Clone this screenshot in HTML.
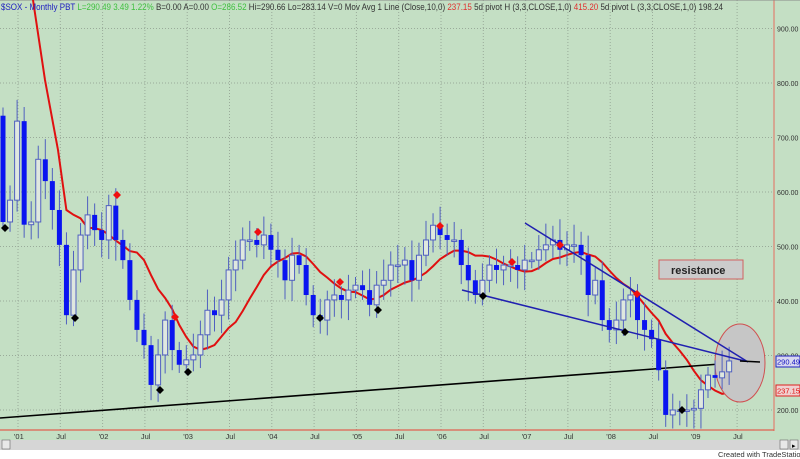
<!DOCTYPE html>
<html><head><meta charset="utf-8"><style>
html,body{margin:0;padding:0;width:800px;height:459px;overflow:hidden;background:#fff;font-family:"Liberation Sans",sans-serif}
svg{display:block}
</style></head><body>
<svg id="s" width="800" height="459" xmlns="http://www.w3.org/2000/svg" font-family="Liberation Sans, sans-serif">
<rect x="0" y="0" width="800" height="440" fill="#c4dfc4"/>
<g id="grid" stroke="#9aab9a" stroke-width="1" stroke-dasharray="1,2"></g>
<line x1="774" y1="0" x2="774" y2="431" stroke="#e08070" stroke-width="1.2"/>
<line x1="0" y1="430" x2="774" y2="430" stroke="#e06050" stroke-width="1.2"/>
<line x1="0" y1="0" x2="800" y2="0" stroke="#888"/>
<polyline id="ma" fill="none" stroke="#e01010" stroke-width="2"/>
<line x1="0" y1="418" x2="760" y2="361" stroke="#000" stroke-width="1.6"/>
<ellipse cx="740" cy="363" rx="25" ry="39" fill="#c6c6c6" stroke="#d05050" stroke-width="1"/>
<g id="candles2"></g>
<line x1="525" y1="223" x2="748" y2="362" stroke="#2020b0" stroke-width="1.5"/>
<line x1="462" y1="290" x2="745" y2="361" stroke="#2020b0" stroke-width="1.5"/>
<line x1="740" y1="361" x2="760" y2="362" stroke="#000" stroke-width="1.6"/>
<g id="piv"></g>
<rect x="659" y="260" width="84" height="19" fill="#cbcbcb" stroke="#d06060"/>
<text x="671" y="274" font-size="11" font-weight="bold" fill="#222">resistance</text>
<g font-size="7" fill="#333" id="ylab"></g>
<rect x="776" y="356" width="24" height="11" fill="#d8d8f0" stroke="#2020c0"/>
<text x="777" y="364.5" font-size="7.5" fill="#1010c0">290.49</text>
<rect x="776" y="385" width="24" height="11" fill="#f0d0d0" stroke="#e02020"/>
<text x="777" y="393.5" font-size="7.5" fill="#e01010">237.15</text>
<g font-size="7.5" fill="#333" id="xlab"></g>
<rect x="0" y="440" width="800" height="10" fill="#d6d6d6"/>
<rect x="2" y="440" width="8" height="9" fill="#e8e8e8" stroke="#666" stroke-width=".6"/>
<rect x="780" y="440" width="8" height="9" fill="#e8e8e8" stroke="#666" stroke-width=".6"/>
<rect x="790" y="440" width="8" height="9" fill="#e8e8e8" stroke="#666" stroke-width=".6"/>
<text x="792" y="448" font-size="7">▸</text>
<text x="718" y="457" font-size="7.5" fill="#333">Created with TradeStation</text>
<text x="1" y="10" font-size="9.5" textLength="722" lengthAdjust="spacingAndGlyphs"><tspan fill="#2020c0">$SOX - Monthly  PBT </tspan><tspan fill="#40c040">L=290.49  3.49  1.22% </tspan><tspan fill="#333"> B=0.00  A=0.00 </tspan><tspan fill="#40c040"> O=286.52 </tspan><tspan fill="#333"> Hi=290.66  Lo=283.14  V=0  Mov Avg 1 Line (Close,10,0) </tspan><tspan fill="#e03030"> 237.15 </tspan><tspan fill="#333"> 5d pivot H (3,3,CLOSE,1,0) </tspan><tspan fill="#e03030"> 415.20 </tspan><tspan fill="#333"> 5d pivot L (3,3,CLOSE,1,0)   198.24</tspan></text>
</svg>
<script>
var NS="http://www.w3.org/2000/svg";
function el(t,a,p){var e=document.createElementNS(NS,t);for(var k in a)e.setAttribute(k,a[k]);p.appendChild(e);return e;}
function Y(p){return 410-(p-200)*0.545;}
var g=document.getElementById('grid');
for(var p=200;p<=900;p+=100){el('line',{x1:0,y1:Y(p),x2:774,y2:Y(p)},g);}
var xl=["'01","Jul","'02","Jul","'03","Jul","'04","Jul","'05","Jul","'06","Jul","'07","Jul","'08","Jul","'09","Jul"];
var xg=document.getElementById('xlab');
for(var i=0;i<xl.length;i++){var x=18+i*42.3;el('line',{x1:x,y1:0,x2:x,y2:430},g);var t=el('text',{x:x-4,y:439},xg);t.textContent=xl[i];}
var yg=document.getElementById('ylab');
for(var p=200;p<=900;p+=100){var t=el('text',{x:777,y:Y(p)+3},yg);t.textContent=p+".00";}
var C=[545,
585,730,540,545,660,620,567,503,374,457,521,558,
530,512,575,512,475,402,347,319,246,301,365,310,
283,292,301,338,383,374,402,457,475,512,512,503,
521,494,475,438,484,466,411,374,365,402,411,402,
420,429,420,393,429,438,466,466,475,438,484,512,
539,521,512,512,466,438,411,438,466,457,466,466,
457,475,475,494,503,512,494,503,503,484,411,438,
365,347,365,402,411,365,347,330,273,191,200,200,
200,203,237,264,259,270,290];
var cg=document.getElementById('candles2');
var xs=[];
for(var i=0;i<C.length;i++){
 var x=3+7.05*(i); xs.push(x);
 var o=i?C[i-1]:740,c=C[i];
 var hi=Math.max(o,c)+15+((i*37)%25),lo=Math.min(o,c)-15-((i*53)%25);
 el('line',{x1:x,y1:Y(hi),x2:x,y2:Y(lo),stroke:'#5060c0','stroke-width':1},cg);
 var bt=Y(Math.max(o,c)),h=Math.max(1.5,Math.abs(Y(o)-Y(c)));
 if(c<o) el('rect',{x:x-2.5,y:bt,width:5,height:h,fill:'#0a14f0'},cg);
 else el('rect',{x:x-2.5,y:bt,width:5,height:h,fill:'#dfe8df',stroke:'#5060c0','stroke-width':1},cg);
}
var pts=["33,0","45,80","58,150"];
for(var i=9;i<C.length;i++){var s=0,n=0;for(var j=i-9;j<=i;j++){s+=C[j];n++;}
 pts.push(xs[i].toFixed(1)+","+Y(s/n).toFixed(1));}
document.getElementById('ma').setAttribute('points',pts.join(" "));
var pv=document.getElementById('piv');
[[117,195],[175,317],[258,232],[340,282],[440,226],[512,262],[560,245],[637,294]].forEach(function(q){el('path',{d:'M'+q[0]+' '+(q[1]-4)+'l4 4-4 4-4-4z',fill:'#f01010'},pv);});
[[5,228],[75,318],[160,390],[188,372],[320,318],[378,310],[483,296],[625,332],[682,410]].forEach(function(q){el('path',{d:'M'+q[0]+' '+(q[1]-4)+'l4 4-4 4-4-4z',fill:'#000'},pv);});
</script>
</body></html>
